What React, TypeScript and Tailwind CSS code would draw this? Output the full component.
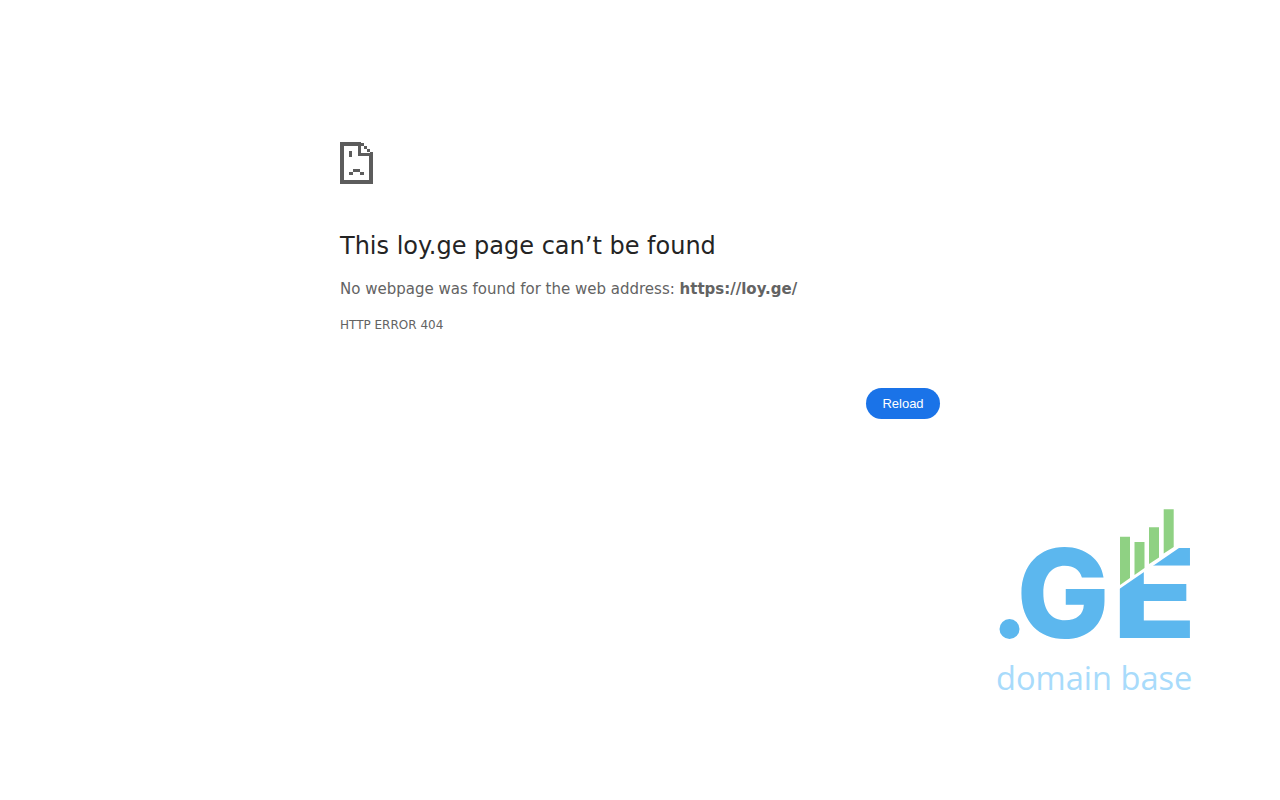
function SadFileIcon() {
  return (
    <svg width="36" height="44" viewBox="0 0 36 44" fill="#5c5c5c" shapeRendering="crispEdges">
      <rect x="0" y="0" width="4" height="42" />
      <rect x="0" y="38" width="33" height="4" />
      <rect x="29" y="12" width="4" height="30" />
      <rect x="0" y="0" width="21" height="4" />
      <rect x="18" y="0" width="3" height="14" />
      <rect x="18" y="11" width="15" height="3" />
      <rect x="21" y="1" width="3" height="3" />
      <rect x="24" y="4" width="3" height="3" />
      <rect x="27" y="7" width="3" height="3" />
      <rect x="30" y="10" width="3" height="3" />
      <rect x="9" y="9" width="3" height="6" />
      <rect x="13" y="27" width="7" height="3" />
      <rect x="9" y="30" width="4" height="3" />
      <rect x="20" y="30" width="4" height="3" />
    </svg>
  );
}

function DomainBaseLogo() {
  return (
    <svg width="210" height="215" viewBox="990 490 210 215">
      <circle cx="1009.5" cy="629" r="10" fill="#5cb7ee" />
      <g fill="#5cb7ee" style={{ fontFamily: 'Inter, sans-serif', fontWeight: 800 }}>
        <text x="1016.5" y="638" fontSize="124">G</text>
        <text transform="translate(1112 638) scale(1.12 1)" fontSize="124">E</text>
      </g>
      <polygon points="1112,594 1195,537 1112,537" fill="#ffffff" />
      <g fill="#8fd183">
        <polygon points="1120,536.7 1130,536.7 1130,578 1120,585" />
        <polygon points="1134.5,542 1144.5,542 1144.5,568 1134.5,575" />
        <polygon points="1149,527.3 1159,527.3 1159,557.5 1149,564" />
        <polygon points="1163.7,509.3 1173.7,509.3 1173.7,547 1163.7,553.5" />
      </g>
      <text x="996" y="690" fontSize="32.6" fill="#a8dbfb" style={{ fontFamily: '"Open Sans", sans-serif' }}>
        domain base
      </text>
    </svg>
  );
}

export default function App() {
  return (
    <div className="min-h-screen bg-white font-['DejaVu_Sans',sans-serif] text-[15px] text-[#636363]">
      <main className="mx-auto w-[600px] pt-[142px]">
        <SadFileIcon />
        <h1 className="mt-[45px] text-[24px] leading-[30px] font-normal text-[#242424]">
          This loy.ge page can’t be found
        </h1>
        <p className="mt-4 leading-6">
          No webpage was found for the web address: <strong className="font-bold">https://loy.ge/</strong>
        </p>
        <div className="mt-4 text-xs leading-4 uppercase">HTTP ERROR 404</div>
        <div className="mt-[55px] flex justify-end">
          <button className="h-[31px] w-[74px] rounded-[20px] bg-[#1a73e8] font-['Liberation_Sans',sans-serif] text-[13px] text-white">
            Reload
          </button>
        </div>
      </main>
      <div className="mt-[71px] flex justify-end pr-[80px]">
        <DomainBaseLogo />
      </div>
    </div>
  );
}
